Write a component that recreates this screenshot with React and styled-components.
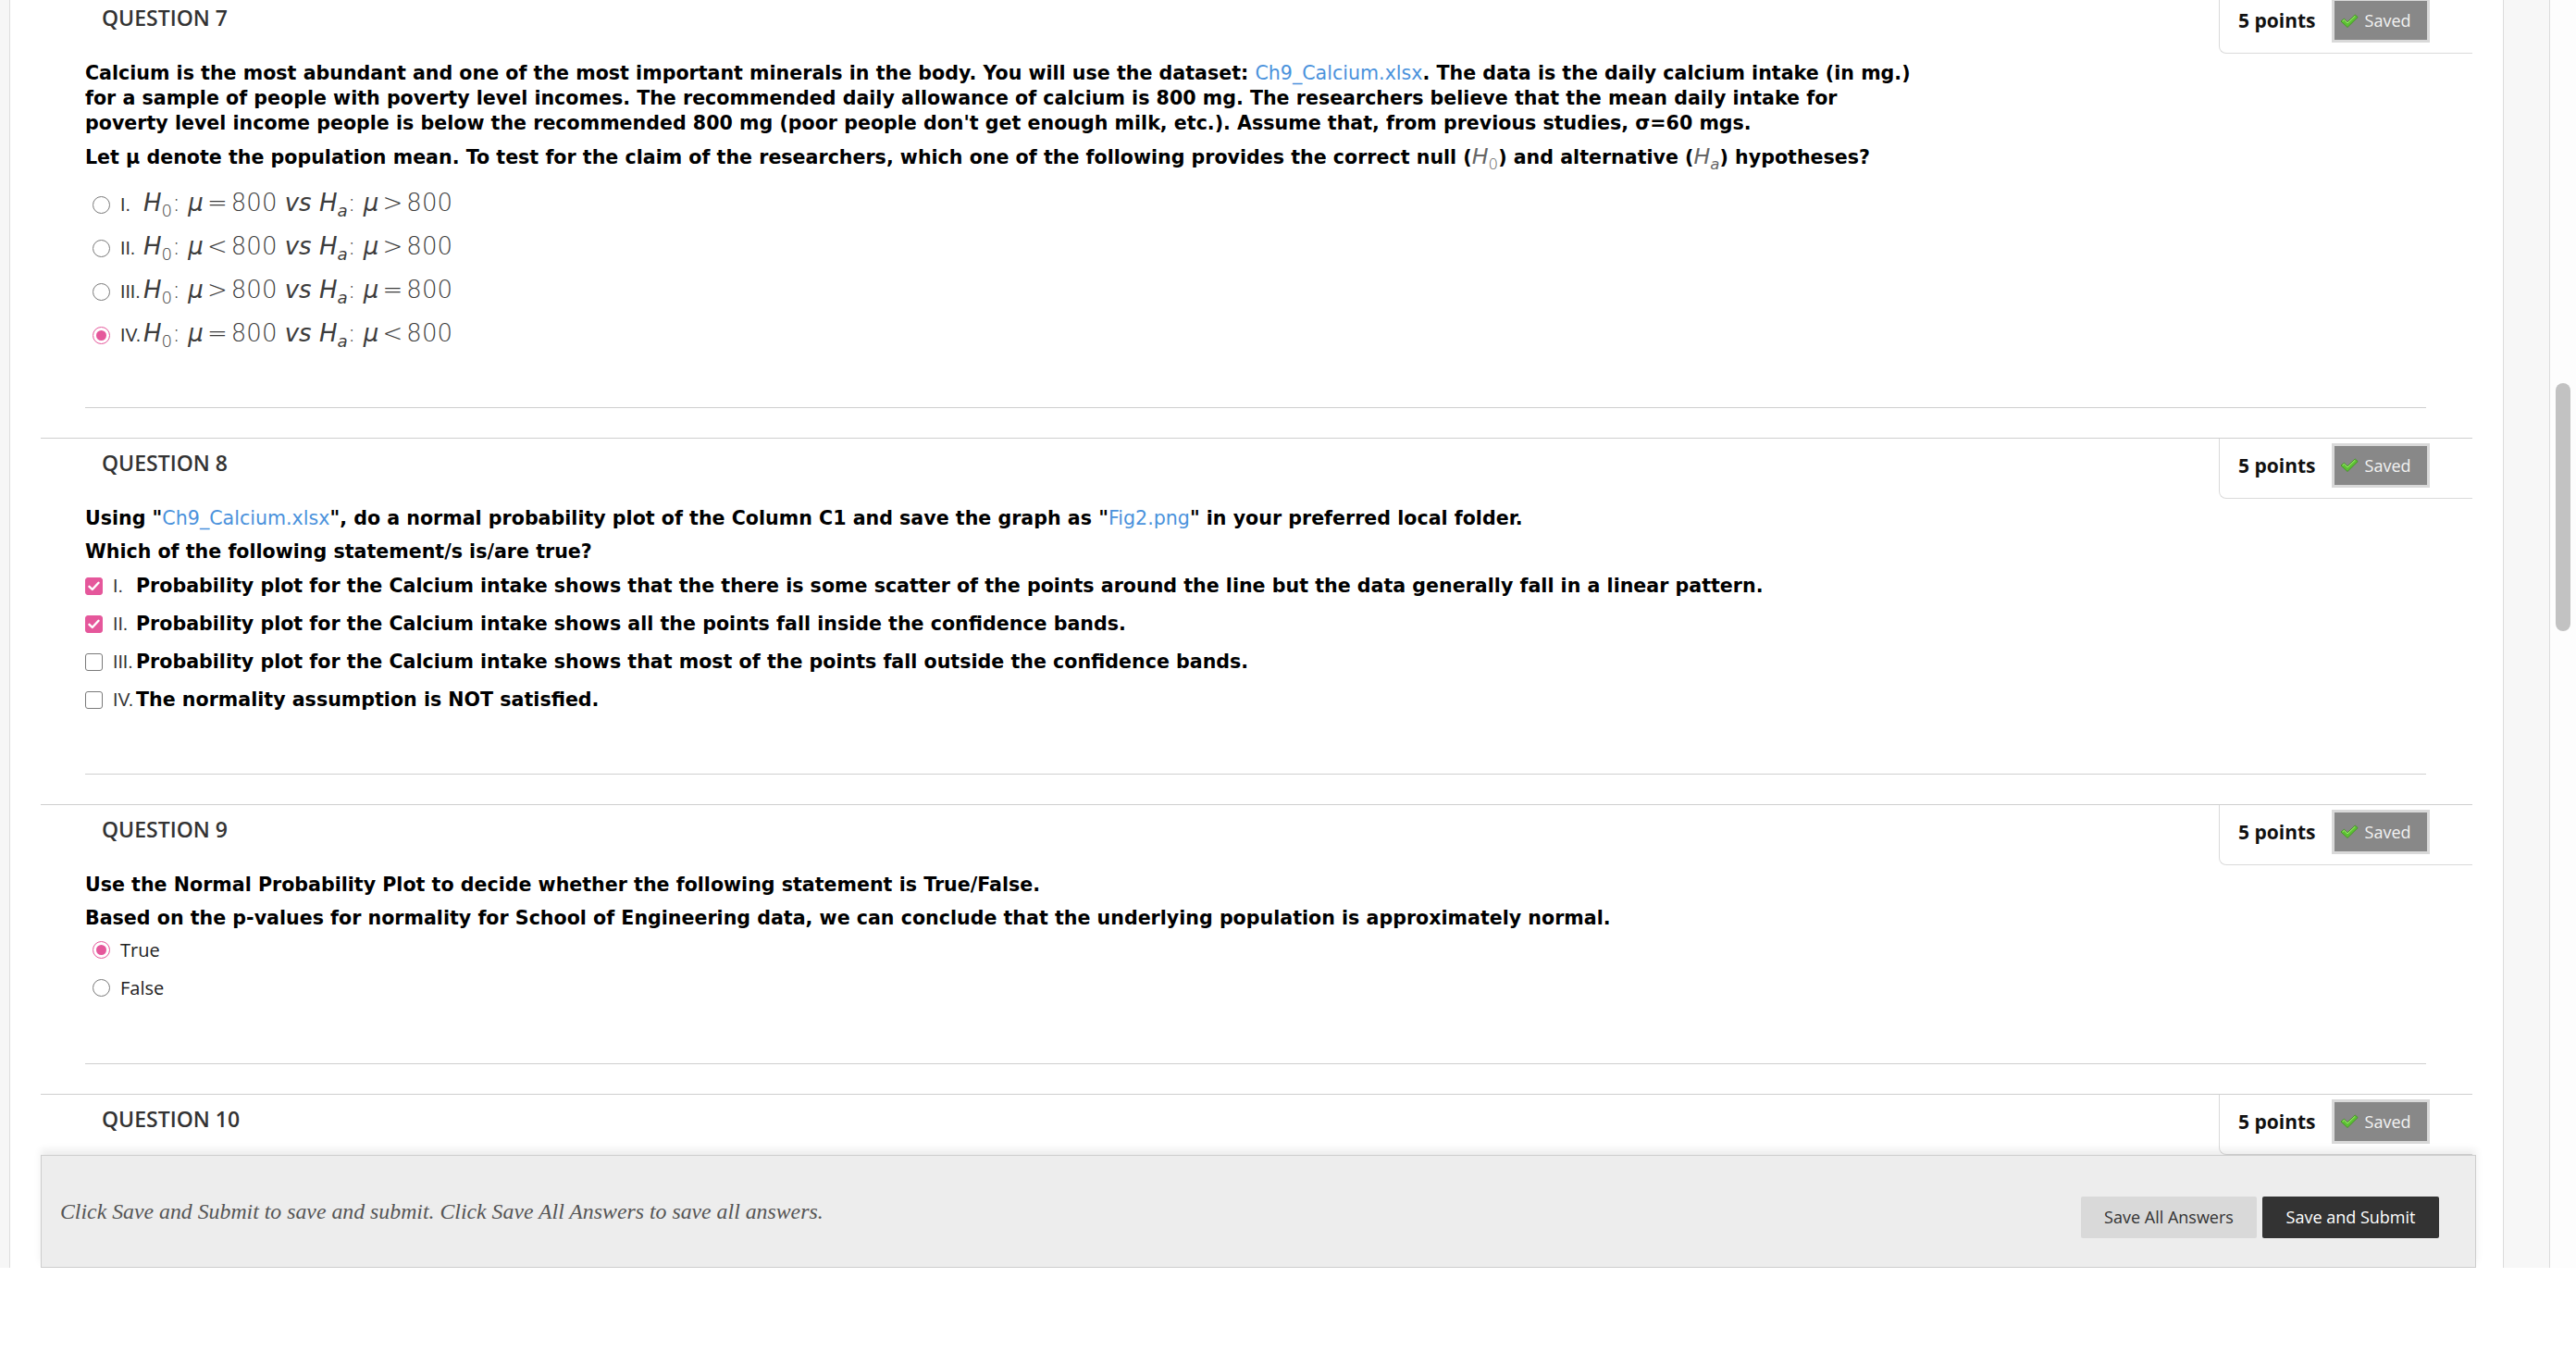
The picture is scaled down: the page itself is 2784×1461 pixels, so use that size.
import React from 'react'
import styled, { createGlobalStyle } from 'styled-components'

const GlobalStyle = createGlobalStyle`
  html, body {
    margin: 0;
    padding: 0;
    background: #fff;
    font-family: "Liberation Sans", Arial, sans-serif;
  }
  * { box-sizing: border-box; }
`

const Page = styled.div`
  display: flex;
  height: 1370px;
`

const LeftRail = styled.div`
  width: 11px;
  background: #f6f6f6;
  border-right: 1px solid #dedede;
`

const Main = styled.div`
  flex: 1;
  display: flex;
  flex-direction: column;
  padding: 0 29px 0 33px;
  min-width: 0;
`

const RightRail = styled.div`
  width: 51px;
  background: #f7f7f7;
  border-left: 1px solid #dcdcdc;
  border-right: 1px solid #dcdcdc;
`

const Scrollbar = styled.div`
  width: 28px;
  background: #fdfdfd;
  display: flex;
  justify-content: center;
`

const Thumb = styled.div`
  margin-top: 414px;
  width: 16px;
  height: 268px;
  border-radius: 8px;
  background: #c2c2c2;
`

const QuestionList = styled.div`
  flex: 1;
  overflow: hidden;
  margin-right: 4px;
`

// the page is scrolled a little, so question 7 starts above the top edge
const Scrolled = styled.div`
  margin-top: -8px;
`

const Block = styled.section`
  border-top: 1px solid #cfcfcf;
  padding-bottom: 32px;
`

const Header = styled.div`
  display: flex;
  justify-content: space-between;
  align-items: flex-start;
  height: 65px;
`

const Title = styled.h2`
  margin: 0;
  padding: 12px 0 0 66px;
  font-family: "Open Sans", sans-serif;
  font-weight: 600;
  font-size: 23px;
  line-height: 28px;
  color: #333;
`

const PointsBox = styled.div`
  width: 274px;
  height: 65px;
  border-left: 1px solid #dadada;
  border-bottom: 1px solid #dadada;
  border-bottom-left-radius: 8px;
  display: flex;
  align-items: center;
  gap: 17px;
  padding: 0 0 6px 20px;
`

const Points = styled.span`
  font-family: "Open Sans", sans-serif;
  font-weight: 700;
  font-size: 21px;
  color: #111;
`

const Badge = styled.span`
  display: flex;
  align-items: center;
  gap: 7px;
  width: 106px;
  height: 48px;
  padding-left: 6px;
  background: #888;
  border: 3px solid #d9d9d9;
  color: #f2f2f2;
  font-family: "Open Sans", sans-serif;
  font-size: 18px;
`

const Body = styled.div`
  padding: 8px 50px 0 48px;
`

const Para = styled.p`
  margin: 0 0 9px;
  max-width: ${p => p.$max || 'none'};
  font-family: "DejaVu Sans", "Liberation Sans", sans-serif;
  font-weight: 700;
  font-size: 20.6px;
  line-height: 27px;
  color: #000;
  &:last-of-type { margin-bottom: 0; }
`

const Link = styled.a`
  color: #4a92dc;
  font-weight: 400;
  text-decoration: none;
`

const OptionList = styled.div`
  margin-top: ${p => p.$top}px;
  padding-left: ${p => p.$indent}px;
`

const Option = styled.label`
  display: flex;
  align-items: center;
  height: ${p => p.$row}px;
`

const Radio = styled.span`
  flex: none;
  width: 19px;
  height: 19px;
  border-radius: 50%;
  border: 1.5px solid ${p => (p.$on ? '#e5579b' : '#7a7a7a')};
  background: #fff;
  display: flex;
  align-items: center;
  justify-content: center;
  margin-right: 11px;
  &::after {
    content: '';
    width: 11px;
    height: 11px;
    border-radius: 50%;
    background: ${p => (p.$on ? '#e5579b' : 'transparent')};
  }
`

const Check = styled.span`
  flex: none;
  width: 19px;
  height: 19px;
  border-radius: 3px;
  border: 1.5px solid ${p => (p.$on ? '#e5579b' : '#7a7a7a')};
  background: ${p => (p.$on ? '#e5579b' : '#fff')};
  display: flex;
  align-items: center;
  justify-content: center;
  margin-right: 11px;
`

const Numeral = styled.span`
  flex: none;
  width: 25px;
  font-size: 19.5px;
  color: #333;
  white-space: nowrap;
`

const Math = styled.span`
  font-family: "DejaVu Sans", "Liberation Sans", sans-serif;
  font-weight: 200;
  font-size: 26px;
  color: #3c3c3c;
  white-space: nowrap;
`

const InlineMath = styled.span`
  font-weight: 200;
  font-size: 1.15em;
  color: #666;
`

const V = styled.i``

const Sub = styled.sub`
  font-size: 0.7em;
  vertical-align: -0.35em;
  font-style: ${p => (p.$it ? 'italic' : 'normal')};
`

const Op = styled.span`
  margin: 0 0.16em;
`

const StatementText = styled.span`
  font-family: "DejaVu Sans", "Liberation Sans", sans-serif;
  font-weight: 700;
  font-size: 20.6px;
  color: #000;
`

const Plain = styled.span`
  font-family: "Open Sans", sans-serif;
  font-size: 20px;
  color: #222;
`

const Divider = styled.hr`
  margin: ${p => p.$top}px 0 0;
  border: 0;
  border-top: 1px solid #cfcfcf;
`

const Footer = styled.div`
  position: relative;
  z-index: 1;
  height: 122px;
  background: #ededed;
  border: 1px solid #cdcdcd;
  box-shadow: 0 -6px 8px rgba(0, 0, 0, 0.07);
  display: flex;
  align-items: center;
  justify-content: space-between;
  padding: 0 39px 0 20px;
`

const FooterNote = styled.p`
  margin: 0;
  font-family: "Liberation Serif", Georgia, serif;
  font-style: italic;
  font-size: 23.8px;
  color: #555;
`

const Buttons = styled.div`
  display: flex;
  gap: 6px;
  margin-top: 12px;
`

const Button = styled.button`
  height: 45px;
  width: ${p => p.$w}px;
  border: 0;
  border-radius: 2px;
  font-family: "Open Sans", sans-serif;
  font-size: 18px;
  background: ${p => (p.$dark ? '#333' : '#d9d9d9')};
  color: ${p => (p.$dark ? '#fff' : '#333')};
`

const SavedTick = () => (
  <svg width="20" height="17" viewBox="0 0 20 17">
    <path d="M1 9 L4.5 6.2 L8 9.8 L16.2 2 L19.2 4.6 L8 15.5 Z" fill="#5cc233" stroke="#3d8f1f" strokeWidth="0.8" strokeLinejoin="round" />
    <path d="M2.6 8.9 L4.5 7.4 L8 10.9 L16.2 3.3" fill="none" stroke="#a6ec74" strokeWidth="1" />
  </svg>
)

const WhiteTick = () => (
  <svg width="13" height="11" viewBox="0 0 13 11">
    <path d="M1.5 5.8 L4.8 9 L11.5 1.8" fill="none" stroke="#fff" strokeWidth="2.4" strokeLinecap="round" strokeLinejoin="round" />
  </svg>
)

const QuestionHeader = ({ n }) => (
  <Header>
    <Title>QUESTION {n}</Title>
    <PointsBox>
      <Points>5 points</Points>
      <Badge>
        <SavedTick />
        Saved
      </Badge>
    </PointsBox>
  </Header>
)

const Hyp = ({ h0, ha }) => (
  <Math>
    <V>H</V><Sub>0</Sub>: <V>μ</V><Op>{h0[0]}</Op>{h0[1]} <V>vs</V> <V>H</V><Sub $it>a</Sub>: <V>μ</V><Op>{ha[0]}</Op>{ha[1]}
  </Math>
)

const hypotheses = [
  { n: 'I.', h0: ['=', '800'], ha: ['>', '800'] },
  { n: 'II.', h0: ['<', '800'], ha: ['>', '800'] },
  { n: 'III.', h0: ['>', '800'], ha: ['=', '800'] },
  { n: 'IV.', h0: ['=', '800'], ha: ['<', '800'], on: true },
]

const statements = [
  { n: 'I.', on: true, text: 'Probability plot for the Calcium intake shows that the there is some scatter of the points around the line but the data generally fall in a linear pattern.' },
  { n: 'II.', on: true, text: 'Probability plot for the Calcium intake shows all the points fall inside the confidence bands.' },
  { n: 'III.', text: 'Probability plot for the Calcium intake shows that most of the points fall outside the confidence bands.' },
  { n: 'IV.', text: 'The normality assumption is NOT satisfied.' },
]

export default function App() {
  return (
    <>
      <GlobalStyle />
      <Page>
        <LeftRail />
        <Main>
          <QuestionList>
            <Scrolled>
              <Block>
                <QuestionHeader n={7} />
                <Body>
                  <Para $max="1990px">
                    Calcium is the most abundant and one of the most important minerals in the body. You will use the dataset: <Link>Ch9_Calcium.xlsx</Link>. The data is the daily calcium intake (in mg.) for a sample of people with poverty level incomes. The recommended daily allowance of calcium is 800 mg. The researchers believe that the mean daily intake for poverty level income people is below the recommended 800 mg (poor people don't get enough milk, etc.). Assume that, from previous studies, σ=60 mgs.
                  </Para>
                  <Para>
                    Let μ denote the population mean. To test for the claim of the researchers, which one of the following provides the correct null (<InlineMath><V>H</V><Sub>0</Sub></InlineMath>) and alternative (<InlineMath><V>H</V><Sub $it>a</Sub></InlineMath>) hypotheses?
                  </Para>
                  <OptionList $top={7} $indent={8}>
                    {hypotheses.map(h => (
                      <Option key={h.n} $row={47}>
                        <Radio $on={h.on} />
                        <Numeral>{h.n}</Numeral>
                        <Hyp h0={h.h0} ha={h.ha} />
                      </Option>
                    ))}
                  </OptionList>
                  <Divider $top={54} />
                </Body>
              </Block>

              <Block>
                <QuestionHeader n={8} />
                <Body>
                  <Para>
                    Using "<Link>Ch9_Calcium.xlsx</Link>", do a normal probability plot of the Column C1 and save the graph as "<Link>Fig2.png</Link>" in your preferred local folder.
                  </Para>
                  <Para>Which of the following statement/s is/are true?</Para>
                  <OptionList $top={3} $indent={0}>
                    {statements.map(s => (
                      <Option key={s.n} $row={41}>
                        <Check $on={s.on}>{s.on && <WhiteTick />}</Check>
                        <Numeral>{s.n}</Numeral>
                        <StatementText>{s.text}</StatementText>
                      </Option>
                    ))}
                  </OptionList>
                  <Divider $top={59} />
                </Body>
              </Block>

              <Block>
                <QuestionHeader n={9} />
                <Body>
                  <Para>Use the Normal Probability Plot to decide whether the following statement is True/False.</Para>
                  <Para>Based on the p-values for normality for School of Engineering data, we can conclude that the underlying population is approximately normal.</Para>
                  <OptionList $top={0} $indent={8}>
                    <Option $row={41}>
                      <Radio $on />
                      <Plain>True</Plain>
                    </Option>
                    <Option $row={41}>
                      <Radio />
                      <Plain>False</Plain>
                    </Option>
                  </OptionList>
                  <Divider $top={61} />
                </Body>
              </Block>

              <Block>
                <QuestionHeader n={10} />
              </Block>
            </Scrolled>
          </QuestionList>
          <Footer>
            <FooterNote>Click Save and Submit to save and submit. Click Save All Answers to save all answers.</FooterNote>
            <Buttons>
              <Button $w={190}>Save All Answers</Button>
              <Button $w={191} $dark>Save and Submit</Button>
            </Buttons>
          </Footer>
        </Main>
        <RightRail />
        <Scrollbar>
          <Thumb />
        </Scrollbar>
      </Page>
    </>
  )
}
